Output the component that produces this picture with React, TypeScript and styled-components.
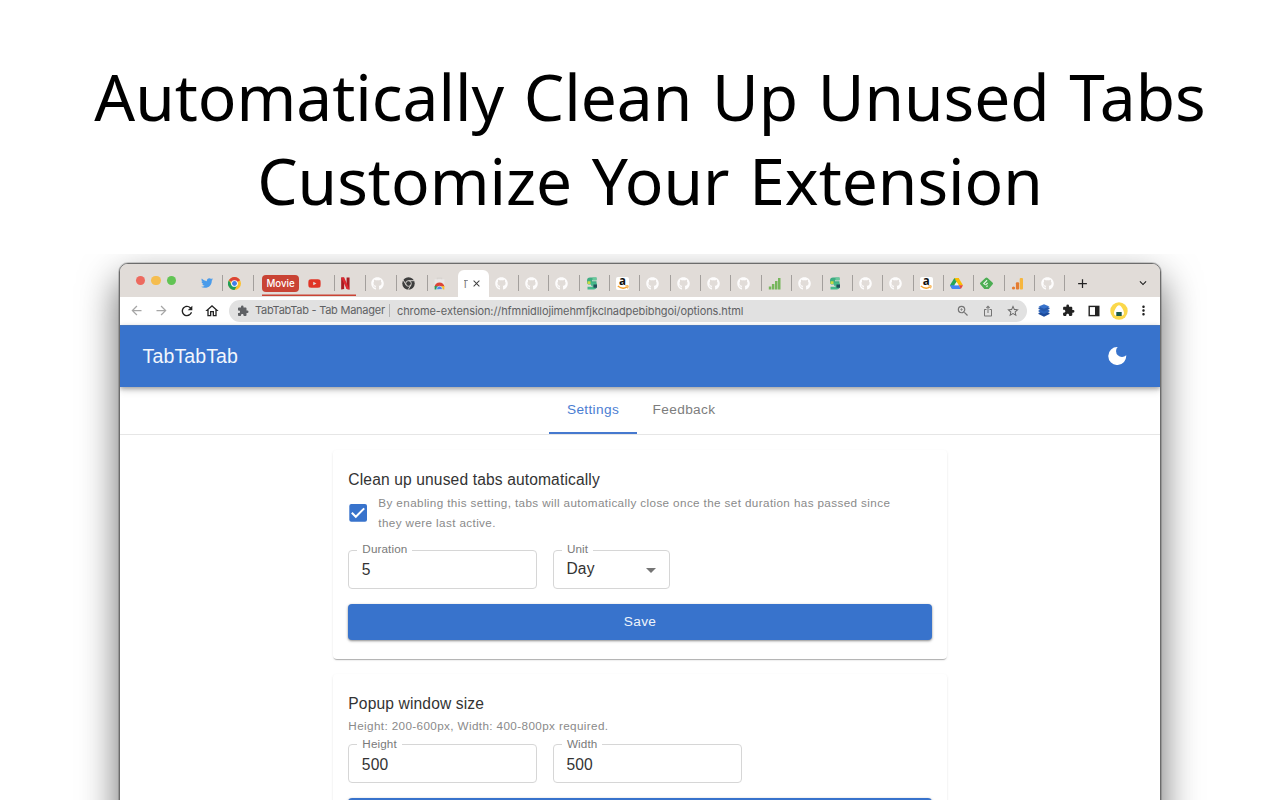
import React from "react";
import styled, { createGlobalStyle, css } from "styled-components";
import {
  MdArrowBack,
  MdArrowForward,
  MdRefresh,
  MdOutlineHome,
  MdExtension,
  MdZoomIn,
  MdIosShare,
  MdStarBorder,
  MdMoreVert,
  MdAdd,
  MdClose,
  MdKeyboardArrowDown,
} from "react-icons/md";
import { FaGithub, FaTwitter, FaYoutube } from "react-icons/fa";

const Global = createGlobalStyle`
  *, *::before, *::after { box-sizing: border-box; }
  html, body { margin: 0; height: 100%; overflow: hidden; background: #fff; }
`;

const Page = styled.main`
  width: 1280px;
  height: 800px;
  overflow: hidden;
  display: flex;
  flex-direction: column;
  background: #fff;
`;

const Headline = styled.h1`
  flex: none;
  margin: 0;
  height: 254px;
  padding: 55px 0 0 20px;
  text-align: center;
  white-space: nowrap;
  color: #000;
  font: 400 64px/84px "Noto Sans", sans-serif;
  word-spacing: 3px;
`;

const HeadlineRow = styled.span`
  display: block;
`;

const Stage = styled.div`
  flex: 1;
  min-height: 0;
  overflow: hidden;
  padding: 9px 119px 0;
`;

const BrowserWindow = styled.section`
  height: 640px;
  border: 1px solid #6c6c6c;
  border-radius: 9px;
  overflow: hidden;
  background: #fff;
  box-shadow: 0 0 0 1px rgba(0, 0, 0, 0.16), 0 17px 38px rgba(0, 0, 0, 0.6);
  font-family: "Liberation Sans", Arial, sans-serif;
`;

const TabStrip = styled.div`
  height: 33px;
  display: flex;
  align-items: stretch;
  background: #e1dcd8;
`;

const Lights = styled.div`
  width: 72px;
  padding: 0 0 0 15.700px;
  display: flex;
  align-items: center;
  gap: 6px;
`;

const Light = styled.i<{ $color: string }>`
  width: 9.5px;
  height: 9.5px;
  border-radius: 50%;
  background: ${(p) => p.$color};
`;

const StripTab = styled.div<{ $width?: number; $offset?: number; $line?: boolean; $grouped?: boolean }>`
  flex: none;
  width: ${(p) => p.$width ?? 30.36}px;
  padding: 5px 0 0 ${(p) => p.$offset ?? 6}px;
  display: flex;
  align-items: center;
  justify-content: space-between;
  ${(p) =>
    p.$grouped &&
    css`
      box-shadow: inset 0 -1px #e1dcd8, inset 0 -2.5px #c94334;
    `}
  &::after {
    content: "";
    width: 1px;
    height: 16px;
    background: ${(p) => (p.$line === false ? "transparent" : "#a39f9c")};
  }
`;

const ActiveTab = styled.div`
  flex: none;
  width: 30.6px;
  height: 27px;
  align-self: flex-end;
  display: flex;
  align-items: center;
  gap: 3px;
  padding-left: 5.5px;
  border-radius: 6px 6px 0 0;
  background: #fff;
  color: #3c3c3c;
  font: 10px "Inter", sans-serif;
`;

const ClippedTitle = styled.span`
  width: 4.5px;
  overflow: hidden;
  text-indent: -1.5px;
  color: #777;
`;

const Group = styled.div`
  width: 41px;
  padding-top: 5px;
  display: flex;
  align-items: center;
  box-shadow: inset 0 -1px #e1dcd8, inset 0 -2.5px #c94334;
`;

const GroupChip = styled.span`
  width: 37px;
  height: 17px;
  border-radius: 4px;
  background: #c94334;
  color: #fff;
  text-align: center;
  font: 500 9.700px/17px "Inter", sans-serif;
`;

const Spacer = styled.div<{ $width?: number }>`
  flex: ${(p) => (p.$width ? "none" : "1")};
  width: ${(p) => p.$width ?? 0}px;
`;

const StripAction = styled.span`
  display: flex;
  align-items: center;
  padding-top: 5px;
  color: #222;
`;

const Toolbar = styled.div`
  height: 28px;
  padding: 0 0 1px 8.5px;
  display: flex;
  align-items: center;
  color: #2b2b2b;
  background: #fff;
`;

const ToolIcon = styled.span<{ $width: number; $color?: string }>`
  flex: none;
  width: ${(p) => p.$width}px;
  display: flex;
  justify-content: center;
  color: ${(p) => p.$color ?? "#222"};
`;

const Omnibox = styled.div`
  flex: none;
  width: 797.5px;
  height: 22px;
  margin-right: 4.5px;
  padding: 0 1.5px 0 8px;
  display: flex;
  align-items: center;
  border-radius: 11px;
  background: #e1e1e1;
  color: #5f6164;
  font: 400 11px/22px "Inter", sans-serif;
  white-space: nowrap;
`;

const SiteName = styled.span`
  flex: none;
  width: 135px;
  margin: 0 7px 0 6px;
  letter-spacing: -0.25px;
  border-right: 1px solid #b4b4b4;
  line-height: 13px;
`;

const Address = styled.span`
  flex: 1;
  letter-spacing: -0.09px;
`;

const AppBar = styled.header`
  position: relative;
  height: 62px;
  padding: 0 33px 1px 22.600px;
  display: flex;
  align-items: center;
  justify-content: space-between;
  background: #3873cc;
  color: #fff;
  border-top: 1px solid #4576be;
  box-shadow: 0 2px 4px rgba(0, 0, 0, 0.25), 0 3px 8px rgba(0, 0, 0, 0.16);
`;

const Brand = styled.h2`
  margin: 0;
  font-weight: 400;
  font-size: 19.5px;
  letter-spacing: 0.12px;
  color: #f2f6fc;
`;

const TabNav = styled.nav`
  height: 48px;
  display: flex;
  justify-content: center;
  border-bottom: 1px solid #e6e6e6;
`;

const NavItem = styled.a<{ $active?: boolean; $width: number }>`
  width: ${(p) => p.$width}px;
  text-align: center;
  font-size: 13.67px;
  line-height: 46px;
  letter-spacing: 0.35px;
  color: ${(p) => (p.$active ? "#4a7dd2" : "#7d7d7d")};
  border-bottom: ${(p) => (p.$active ? "2px solid #4679cf" : "0")};
`;

const Content = styled.div`
  width: 614.5px;
  margin: 0 auto;
  padding-top: 15px;
  display: flex;
  flex-direction: column;
  gap: 15px;
`;

const Card = styled.section<{ $height: number }>`
  height: ${(p) => p.$height}px;
  padding: 18px 15.600px 0 15.6px;
  border-radius: 4px;
  box-shadow: 0 1.5px 1px -1px rgba(0, 0, 0, 0.22), 0 1px 1px rgba(0, 0, 0, 0.08), 0 1px 3px rgba(0, 0, 0, 0.08);
`;

const CardTitle = styled.h3`
  margin: 0;
  font-weight: 400;
  font-size: 15.6px;
  line-height: 24px;
  letter-spacing: 0.13px;
  color: #333;
`;

const Option = styled.label`
  display: flex;
  align-items: center;
  gap: 10px;
  margin-top: 1px;
`;

const CheckBox = styled.span`
  flex: none;
  width: 20px;
  height: 20px;
`;

const Note = styled.p`
  margin: 0;
  white-space: pre;
  font-size: 11.7px;
  line-height: 19.5px;
  letter-spacing: 0.38px;
  color: #8a8a8a;
`;

const Fields = styled.div<{ $top: number }>`
  display: flex;
  gap: 15.6px;
  margin-top: ${(p) => p.$top}px;
`;

const Field = styled.div<{ $width: number; $lift?: number; $drop?: number }>`
  position: relative;
  width: ${(p) => p.$width}px;
  height: 39px;
  padding: ${(p) => p.$drop ?? 0}px 13px ${(p) => p.$lift ?? 0}px 12.5px;
  display: flex;
  align-items: center;
  justify-content: space-between;
  border: 1px solid #d6d6d6;
  border-radius: 4px;
  font-size: 15.6px;
  letter-spacing: 0.14px;
  color: #333;
`;

const FieldLabel = styled.span<{ $top?: number }>`
  position: absolute;
  left: 8px;
  top: ${(p) => p.$top ?? -9}px;
  padding: 0 5px;
  background: #fff;
  font-size: 11.7px;
  line-height: 16px;
  letter-spacing: 0.11px;
  color: #7a7a7a;
`;

const Caret = styled.svg`
  margin-top: 3px;
`;

const SaveButton = styled.button`
  display: block;
  width: 100%;
  height: 35.5px;
  margin-top: 15.4px;
  padding: 0 0 1.500px;
  border: 0;
  border-radius: 4px;
  background: #3873cc;
  box-shadow: 0 1px 3px rgba(0, 0, 0, 0.3), 0 1px 2px rgba(0, 0, 0, 0.2);
  color: #eef3fb;
  font: 400 13.67px "Liberation Sans", Arial, sans-serif;
  letter-spacing: 0.4px;
`;

const Github = () => <FaGithub size={13} color="#fdfcfc" />;

const ChromeColor = () => (
  <svg width="13" height="13" viewBox="0 0 24 24">
    <circle cx="12" cy="12" r="12" fill="#fbc02d" />
    <path d="M12 12 1.6 6A12 12 0 0 1 22.4 6z" fill="#db4437" />
    <path d="M1.6 6A12 12 0 0 0 12 24l5.2-9L12 12 6.8 15z" fill="#1f9d58" />
    <circle cx="12" cy="12" r="6.2" fill="#fff" />
    <circle cx="12" cy="12" r="4.5" fill="#3f7de8" />
  </svg>
);

const ChromeDark = () => (
  <svg width="13" height="13" viewBox="0 0 24 24">
    <circle cx="12" cy="12" r="11.5" fill="#3e3e3e" />
    <g stroke="#d8d4d0" strokeWidth="1.8" fill="none">
      <circle cx="12" cy="12" r="5.2" />
      <path d="M12 6.8h10.5M7.5 14.6 2.3 5.7M16.5 14.6l-5.2 9" />
    </g>
  </svg>
);

const WebStore = () => (
  <svg width="13" height="13" viewBox="0 0 24 24">
    <path d="M3 4h18v19H3z" fill="#e9e7e6" />
    <path d="M8 4V2h8v2" stroke="#d8d3d0" strokeWidth="2" fill="none" />
    <path d="M3 18a9 8 0 0 1 18 0z" fill="#dc4437" />
    <path d="M3 16.500v6.500h8l1-5z" fill="#229b58" />
    <path d="M21 16.500v6.500H11l1-6z" fill="#f8bd2b" />
    <path d="M6.500 23a5.5 6 0 0 1 11 0z" fill="#4c83ec" stroke="#fff" strokeWidth="1" />
  </svg>
);

const Netflix = () => (
  <svg width="13" height="13" viewBox="0 0 24 24">
    <path d="M4 1h5.500v21l-5.500 1zM14 1h5.500v22l-5.500-1z" fill="#a91c22" />
    <path d="M4 1h5.500l10 22-5.500-1z" fill="#dc2830" />
  </svg>
);

const Snake = () => (
  <svg width="12" height="13" viewBox="0 0 24 24" preserveAspectRatio="none">
    <path d="M21 1H8a6 6 0 0 0-6 6v2a5 5 0 0 0 5 5h14V8H12V6h9z" fill="#3fad82" />
    <path d="M3 23h12a7 7 0 0 0 7-6v-3a5 5 0 0 0-5-4h-7v6h3v2H3z" fill="#45b98b" />
    <path d="M15 14h7v6h-7z" fill="#244f5c" />
    <path d="M3 8h6v5H3z" fill="#cbdc45" />
    <path d="M13 1h8v5h-8z" fill="#6bc89c" />
  </svg>
);

const AmazonBox = styled.span`
  width: 13px;
  height: 13px;
  border-radius: 2px;
  background: #fff;
  display: flex;
  flex-direction: column;
  align-items: center;
  font: 700 11.5px/8px "Open Sans", sans-serif;
  color: #111;
`;

const Amazon = () => (
  <AmazonBox>
    a
    <svg width="12" height="5" viewBox="0 0 12 5">
      <path d="M.8 1Q5.500 5 10 2" stroke="#f6a02b" strokeWidth="1.3" fill="none" />
      <path d="M8.300.900 11.200.800 10.600 3.400" stroke="#f6a02b" strokeWidth="1" fill="none" />
    </svg>
  </AmazonBox>
);

const Bars = () => (
  <svg width="13" height="13" viewBox="0 0 13 13" fill="#76b65c">
    <path d="M.800 9.500h2.500v3H.800zM3.900 7h2.500v5.500H3.900zM7 4h2.500v8.500H7zM10 1h2.500v11.500H10z" />
  </svg>
);

const Drive = () => (
  <svg width="13" height="13" viewBox="0 0 24 24">
    <path d="M8 2h8l-4 7z" fill="#188038" />
    <path d="M8 2 0 15l4 7 8-13z" fill="#24a656" />
    <path d="M16 2 8.200 2 16 15h8z" fill="#fbbc04" />
    <path d="M8 15H0l4 7h16l-4-7z" fill="#4285f4" />
    <path d="M16 15h8l-4 7z" fill="#e6473a" />
    <path d="m12 9-4 6h8z" fill="#f4f2f0" />
  </svg>
);

const Feedly = () => (
  <svg width="13" height="13" viewBox="0 0 24 24">
    <path d="M10 2q2-2 4 0l9 8q2 2 0 4l-7 8H8l-7-8q-2-2 0-4z" fill="#4cad53" />
    <path d="m13 6-6 6 2 2M14 11l-4 4M14 16l-2 2" stroke="#e9f5e7" strokeWidth="2.200" fill="none" />
  </svg>
);

const Analytics = () => (
  <svg width="13" height="13" viewBox="0 0 13 13">
    <rect x="8.700" y="1" width="3.300" height="11.500" rx="1" fill="#f6b63e" />
    <rect x="4.900" y="5.200" width="3.200" height="7.300" rx="1" fill="#e47c32" />
    <circle cx="2.500" cy="11" r="1.600" fill="#e47c32" />
  </svg>
);

const Stack = () => (
  <svg width="12" height="13" viewBox="0 0 12 13">
    <path d="m6 6.500 5.500 2.500v1L6 12.800.500 10V9z" fill="#1c4b9c" />
    <path d="m6 4 5.500 2.500v1L6 10 .500 7.500v-1z" fill="#2a62bb" />
    <path d="m6 1.500 5.500 2.200v1.200L6 7.500.500 4.900V3.700z" fill="#2558ab" />
    <path d="m6 .200 5.500 2.200L6 4.800.500 2.400z" fill="#3873cc" />
  </svg>
);

const SidePanel = () => (
  <svg width="12" height="12" viewBox="0 0 12 12">
    <rect x="1.200" y="1.400" width="9.600" height="9.200" fill="#fff" stroke="#222" strokeWidth="1.400" />
    <path d="M7 1h4v10H7z" fill="#222" />
  </svg>
);

const Avatar = () => (
  <svg width="18" height="18" viewBox="0 0 18 18">
    <circle cx="9" cy="9" r="8.700" fill="#fbd84b" />
    <path d="M9 3.200c2 0 5 5.200 5 7.800 0 2.400-1.600 3-5 3s-5-.600-5-3c0-2.600 3-7.800 5-7.800z" fill="#fff" />
    <path d="M6.300 10h5.400v4H6.300z" fill="#1b5a49" />
  </svg>
);

const trailingTabs = [
  Github, Github, Github, Snake, Amazon, Github, Github, Github, Github, Bars,
  Github, Snake, Github, Github, Amazon, Drive, Feedly, Analytics, Github,
];

export default function App() {
  return (
    <Page>
      <Global />
      <Headline>
        <HeadlineRow>Automatically Clean Up Unused Tabs</HeadlineRow>
        <HeadlineRow>Customize Your Extension</HeadlineRow>
      </Headline>
      <Stage>
        <BrowserWindow>
          <TabStrip>
            <Lights>
              <Light $color="#ed6a5f" />
              <Light $color="#f5bd4f" />
              <Light $color="#62c454" />
            </Lights>
            <StripTab $width={31} $offset={9}><FaTwitter size={12} color="#4a9bea" /></StripTab>
            <StripTab $width={31} $offset={5.2}><ChromeColor /></StripTab>
            <Spacer $width={8} />
            <Group><GroupChip>Movie</GroupChip></Group>
            <StripTab $width={31.5} $offset={5} $grouped><FaYoutube size={13} color="#e03426" /></StripTab>
            <StripTab $width={21.5} $offset={4.500} $line={false} $grouped><Netflix /></StripTab>
            <StripTab $width={9.5} $offset={8}><span /></StripTab>
            <StripTab $width={31} $offset={5}><Github /></StripTab>
            <StripTab $width={31} $offset={5}><ChromeDark /></StripTab>
            <StripTab $width={30.5} $offset={5} $line={false}><WebStore /></StripTab>
            <ActiveTab>
              <ClippedTitle>T</ClippedTitle>
              <MdClose size={11} />
            </ActiveTab>
            {trailingTabs.map((Icon, i) => (
              <StripTab key={i}><Icon /></StripTab>
            ))}
            <Spacer $width={10} />
            <StripAction><MdAdd size={15} /></StripAction>
            <Spacer />
            <StripAction><MdKeyboardArrowDown size={14} /></StripAction>
            <Spacer $width={10} />
          </TabStrip>
          <Toolbar>
            <ToolIcon $width={16} $color="#a6a6a6"><MdArrowBack size={15} /></ToolIcon>
            <Spacer $width={9} />
            <ToolIcon $width={16} $color="#a6a6a6"><MdArrowForward size={15} /></ToolIcon>
            <Spacer $width={9} />
            <ToolIcon $width={16}><MdRefresh size={16} /></ToolIcon>
            <Spacer $width={9} />
            <ToolIcon $width={16}><MdOutlineHome size={16} /></ToolIcon>
            <Spacer $width={9.5} />
            <Omnibox>
              <MdExtension size={12} />
              <SiteName>TabTabTab - Tab Manager</SiteName>
              <Address>chrome-extension://hfmnidllojimehmfjkclnadpebibhgoi/options.html</Address>
              <ToolIcon $width={25} $color="#747474"><MdZoomIn size={14} /></ToolIcon>
              <ToolIcon $width={25} $color="#747474"><MdIosShare size={12} /></ToolIcon>
              <ToolIcon $width={25} $color="#666"><MdStarBorder size={14} /></ToolIcon>
            </Omnibox>
            <ToolIcon $width={25}><Stack /></ToolIcon>
            <ToolIcon $width={25}><MdExtension size={13} /></ToolIcon>
            <ToolIcon $width={25}><SidePanel /></ToolIcon>
            <ToolIcon $width={25}><Avatar /></ToolIcon>
            <ToolIcon $width={25}><MdMoreVert size={15} /></ToolIcon>
          </Toolbar>
          <AppBar>
            <Brand>TabTabTab</Brand>
            <svg width="19" height="18" viewBox="0 0 19 18" fill="#fff">
              <path d="M9.700.030A9 9 0 1 0 18.200 8.200 5.750 5.750 0 1 1 9.700.030z" />
            </svg>
          </AppBar>
          <TabNav>
            <NavItem $active $width={88}>Settings</NavItem>
            <NavItem $width={94}>Feedback</NavItem>
          </TabNav>
          <Content>
            <Card $height={209}>
              <CardTitle>Clean up unused tabs automatically</CardTitle>
              <Option>
                <CheckBox>
                  <svg width="20" height="20" viewBox="0 0 20 20">
                    <rect x="1.300" y="1" width="17.700" height="17.700" rx="2" fill="#3873cc" />
                    <path d="m3.800 9.800 4 4 8.400-8.400" stroke="#fff" strokeWidth="2" fill="none" />
                  </svg>
                </CheckBox>
                <Note>{"By enabling this setting, tabs will automatically close once the set duration has passed since\nthey were last active."}</Note>
              </Option>
              <Fields $top={18}>
                <Field $width={189}><FieldLabel $top={-10}>Duration</FieldLabel>5</Field>
                <Field $width={117} $lift={2}>
                  <FieldLabel $top={-10}>Unit</FieldLabel>
                  Day
                  <Caret width="10" height="5" viewBox="0 0 10 5"><path d="M0 0h10L5 5z" fill="#757575" /></Caret>
                </Field>
              </Fields>
              <SaveButton>Save</SaveButton>
            </Card>
            <Card $height={209}>
              <CardTitle>Popup window size</CardTitle>
              <Note>Height: 200-600px, Width: 400-800px required.</Note>
              <Fields $top={8.5}>
                <Field $width={189} $drop={2}><FieldLabel>Height</FieldLabel>500</Field>
                <Field $width={189} $drop={2}><FieldLabel>Width</FieldLabel>500</Field>
              </Fields>
              <SaveButton />
            </Card>
          </Content>
        </BrowserWindow>
      </Stage>
    </Page>
  );
}
